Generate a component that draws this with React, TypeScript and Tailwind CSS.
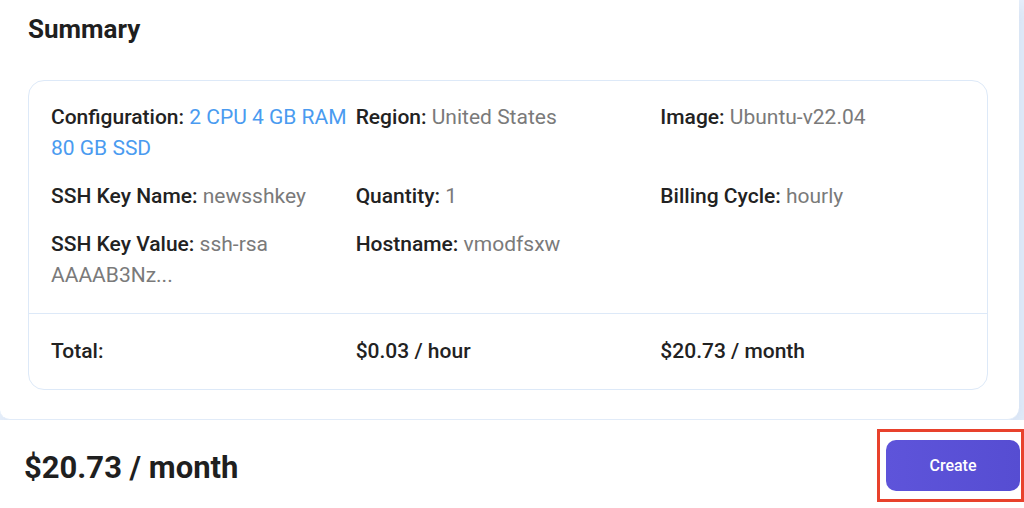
const items = [
  { label: 'Configuration:', value: '2 CPU 4 GB RAM 80 GB SSD', accent: true },
  { label: 'Region:', value: 'United States' },
  { label: 'Image:', value: 'Ubuntu-v22.04' },
  { label: 'SSH Key Name:', value: 'newsshkey' },
  { label: 'Quantity:', value: '1' },
  { label: 'Billing Cycle:', value: 'hourly' },
  { label: 'SSH Key Value:', value: 'ssh-rsa AAAAB3Nz...' },
  { label: 'Hostname:', value: 'vmodfsxw' },
];

function Field({ label, value, accent }: { label: string; value: string; accent?: boolean }) {
  return (
    <p className="pr-2 text-[21px] leading-[31px]">
      <span className="font-medium text-[#222222]">{label}</span>{' '}
      <span className={accent ? 'text-[#4a9bf0]' : 'text-[#7a7a7a]'}>{value}</span>
    </p>
  );
}

export default function App() {
  return (
    <div className="h-[508px] w-[1024px] overflow-hidden bg-[#e8f0fb] font-['Roboto',sans-serif]">
      <section className="w-[1019px] rounded-br-[12px] rounded-bl-[10px] border-b border-[#e1ebf8] bg-white pl-[28px] pr-[31px] pt-[13px] pb-[29px] shadow-[6px_6px_16px_rgba(180,200,230,0.35)]">
        <h2 className="text-[26px] font-bold leading-[32px] text-[#1f1f1f]">Summary</h2>

        <div className="mt-[35px] rounded-[16px] border border-[#dde9f8]">
          <div className="grid grid-cols-3 gap-y-[17px] px-[22px] pt-[21px] pb-[22px]">
            {items.map((it) => (
              <Field key={it.label} {...it} />
            ))}
          </div>
          <div className="grid grid-cols-3 border-t border-[#dde9f8] px-[22px] py-[22px] text-[21px] font-medium leading-[31px] text-[#222222]">
            <p>Total:</p>
            <p>$0.03 / hour</p>
            <p>$20.73 / month</p>
          </div>
        </div>
      </section>

      <footer className="flex h-[89px] items-center justify-between bg-white pl-[24px] pt-[8px]">
        <p className="text-[31px] font-bold text-[#1f1f1f]">$20.73 / month</p>
        <div className="mb-[6px] border-[3px] border-[#e8412c] pl-[6px] pr-[1px] pt-[8px] pb-[8px]">
          <button className="h-[51px] w-[134px] rounded-[10px] bg-gradient-to-r from-[#5e54da] to-[#564dd2] text-[16px] font-medium text-white">
            Create
          </button>
        </div>
      </footer>
    </div>
  );
}
